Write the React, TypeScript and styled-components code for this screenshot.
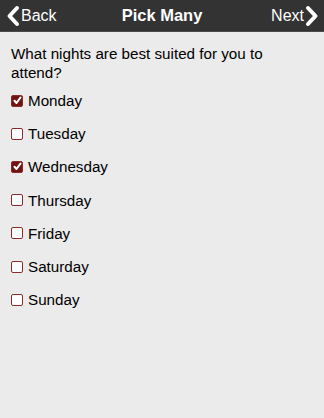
import React, { useState } from "react";
import styled, { createGlobalStyle } from "styled-components";

const Global = createGlobalStyle`
  html, body { margin: 0; padding: 0; }
  body { background: #ebebeb; font-family: "Liberation Sans", Arial, sans-serif; }
`;

const Page = styled.div`
  width: 324px;
  height: 418px;
  background: #ebebeb;
  display: flex;
  flex-direction: column;
`;

const Bar = styled.div`
  height: 31px;
  background: #333333;
  border-bottom: 1px solid #4a4a4a;
  display: flex;
  align-items: center;
  justify-content: space-between;
  padding: 0 5px 0 6px;
  position: relative;
`;

const NavButton = styled.div`
  display: flex;
  align-items: center;
  gap: 1px;
  color: #ffffff;
  font-size: 16px;
  line-height: 1;
`;

const Title = styled.div`
  position: absolute;
  left: 0;
  right: 0;
  text-align: center;
  color: #ffffff;
  font-weight: bold;
  font-size: 16.5px;
  pointer-events: none;
`;

const Content = styled.div`
  padding: 12px 11px;
  display: flex;
  flex-direction: column;
`;

const Question = styled.div`
  font-size: 15.2px;
  line-height: 19px;
  color: #000;
  margin-bottom: 2px;
`;

const Row = styled.label`
  display: flex;
  align-items: center;
  height: 33.2px;
  font-size: 15.2px;
  color: #000;
  gap: 5px;
`;

const Box = styled.span<{ $checked: boolean }>`
  width: 12px;
  height: 12px;
  box-sizing: border-box;
  border-radius: 2px;
  border: 1.5px solid #8a2a2a;
  background: ${(p) => (p.$checked ? "#701414" : "#ffffff")};
  display: flex;
  align-items: center;
  justify-content: center;
`;

const Chevron = ({ dir }: { dir: "left" | "right" }) => (
  <svg width="14" height="22" viewBox="0 0 14 22">
    <path
      d={dir === "left" ? "M11 3 L3.5 11 L11 19" : "M3 3 L10.5 11 L3 19"}
      fill="none"
      stroke="#fff"
      strokeWidth="4"
      strokeLinecap="round"
      strokeLinejoin="round"
    />
  </svg>
);

const days = ["Monday", "Tuesday", "Wednesday", "Thursday", "Friday", "Saturday", "Sunday"];

export default function App() {
  const [sel, setSel] = useState<Record<string, boolean>>({ Monday: true, Wednesday: true });
  return (
    <Page>
      <Global />
      <Bar>
        <NavButton>
          <Chevron dir="left" />
          <span>Back</span>
        </NavButton>
        <Title>Pick Many</Title>
        <NavButton>
          <span>Next</span>
          <Chevron dir="right" />
        </NavButton>
      </Bar>
      <Content>
        <Question>What nights are best suited for you to attend?</Question>
        {days.map((d) => (
          <Row key={d} onClick={() => setSel({ ...sel, [d]: !sel[d] })}>
            <Box $checked={!!sel[d]}>
              {sel[d] && (
                <svg width="9" height="9" viewBox="0 0 9 9">
                  <path d="M1.5 4.8 L3.5 7 L7.5 1.5" fill="none" stroke="#fff" strokeWidth="2.1" strokeLinecap="round" strokeLinejoin="round" />
                </svg>
              )}
            </Box>
            <span>{d}</span>
          </Row>
        ))}
      </Content>
    </Page>
  );
}
